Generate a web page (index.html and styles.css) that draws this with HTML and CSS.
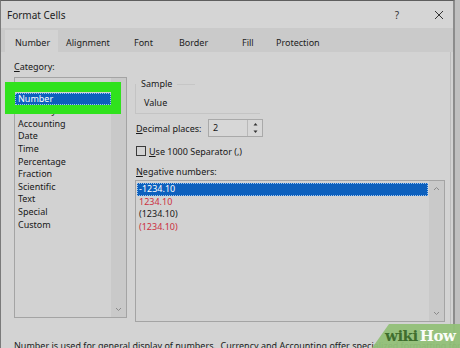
FILE: index.html
```html
<!DOCTYPE html>
<html>
<head>
<meta charset="utf-8">
<link rel="stylesheet" href="styles.css">
</head>
<body>
<div class="screen">
  <div class="window">
    <div class="titlebar">
      <span class="title">Format Cells</span>
      <span class="help">?</span>
      <span class="close"><svg width="10" height="10" viewBox="0 0 10 10"><path d="M1 1L9 9M9 1L1 9" stroke="#333" stroke-width="1"/></svg></span>
    </div>
    <div class="tabs">
      <span class="tab active t-number">Number</span>
      <span class="tab t-align">Alignment</span>
      <span class="tab t-font">Font</span>
      <span class="tab t-border">Border</span>
      <span class="tab t-fill">Fill</span>
      <span class="tab t-prot">Protection</span>
    </div>
    <div class="panel">
      <div class="cols">
        <div class="left">
          <div class="label"><u>C</u>ategory:</div>
          <div class="listbox cat">
            <div class="items">
              <div class="item">General</div>
              <div class="item sel">Number</div>
              <div class="item">Currency</div>
              <div class="item">Accounting</div>
              <div class="item">Date</div>
              <div class="item">Time</div>
              <div class="item">Percentage</div>
              <div class="item">Fraction</div>
              <div class="item">Scientific</div>
              <div class="item">Text</div>
              <div class="item">Special</div>
              <div class="item">Custom</div>
            </div>
            <div class="scrollbar">
              <svg class="chev" width="7" height="5" viewBox="0 0 7 5"><path d="M1 4L3.5 1.5L6 4" fill="none" stroke="#8a8a8a" stroke-width="1"/></svg>
              <svg class="chev" width="7" height="5" viewBox="0 0 7 5"><path d="M1 1L3.5 3.5L6 1" fill="none" stroke="#8a8a8a" stroke-width="1"/></svg>
            </div>
          </div>
        </div>
        <div class="right">
          <div class="sample">
            <div class="legend"><span>Sample</span><span class="legend-line"></span></div>
            <div class="sample-box">Value</div>
          </div>
          <div class="decimal">
            <span class="dlabel"><u>D</u>ecimal places:</span>
            <div class="spin">
              <span class="spin-val">2</span>
              <span class="spin-btns">
                <svg width="15" height="8" viewBox="0 0 15 8"><path d="M5.5 5.5L7.5 3L9.5 5.5Z" fill="#333"/></svg>
                <svg width="15" height="8" viewBox="0 0 15 8"><path d="M5.5 2.5L7.5 5L9.5 2.5Z" fill="#333"/></svg>
              </span>
            </div>
          </div>
          <div class="check">
            <span class="box"></span>
            <span><u>U</u>se 1000 Separator (,)</span>
          </div>
          <div class="label neg-label"><u>N</u>egative numbers:</div>
          <div class="listbox neg">
            <div class="items">
              <div class="item sel">-1234.10</div>
              <div class="item red">1234.10</div>
              <div class="item">(1234.10)</div>
              <div class="item red">(1234.10)</div>
            </div>
            <div class="scrollbar">
              <svg class="chev" width="7" height="5" viewBox="0 0 7 5"><path d="M1 4L3.5 1.5L6 4" fill="none" stroke="#8a8a8a" stroke-width="1"/></svg>
              <svg class="chev" width="7" height="5" viewBox="0 0 7 5"><path d="M1 1L3.5 3.5L6 1" fill="none" stroke="#8a8a8a" stroke-width="1"/></svg>
            </div>
          </div>
        </div>
      </div>
      <div class="desc">Number is used for general display of numbers.&nbsp; Currency and Accounting offer specialized formatting for monetary value.</div>
    </div>
  </div>
  <div class="highlight"></div>
  <div class="wikihow">
    <svg class="wh-bg" width="88" height="24" viewBox="0 0 88 24"><path d="M0 24L17 0H88V24Z" fill="#92c078" fill-opacity="0.95"/></svg>
    <span class="wh-text"><span class="wiki">wiki</span><span class="how">How</span></span>
  </div>
</div>
</body>
</html>
```

FILE: styles.css
```css
* { box-sizing: border-box; margin: 0; padding: 0; }
html, body { width: 460px; height: 348px; overflow: hidden; }
body {
  background: #c0c0c0;
  font-family: "Noto Sans", "Open Sans", sans-serif;
  font-size: 9px;
  color: #181818;
}
u { text-decoration: underline; text-underline-offset: 1px; }
.screen { position: relative; width: 460px; height: 348px; overflow: hidden; }

.window {
  width: 455px;
  height: 348px;
  background: #d3d3d3;
  border-top: 1px solid #5e5e5e;
  border-left: 1px solid #7a7a7a;
  border-right: 2px solid #8c8c8c;
  display: flex;
  flex-direction: column;
}

.titlebar {
  height: 27px;
  flex: none;
  display: flex;
  align-items: center;
  padding-left: 6px;
  background: #d5d5d5;
}
.title { flex: 1; font-size: 10px; color: #222; }
.help { width: 16px; text-align: center; margin-right: 26px; font-size: 10px; color: #333; }
.close { width: 16px; height: 12px; display: flex; align-items: center; justify-content: center; margin-right: 6px; }

.tabs {
  height: 24px;
  flex: none;
  display: flex;
  align-items: flex-end;
  padding-left: 4px;
  background: #cacaca;
}
.tab {
  height: 22px;
  padding-top: 6px;
  line-height: 14px;
  padding-left: 8px;
  color: #222;
}
.tab.active { background: #d3d3d3; padding-left: 10px; }
.t-number { width: 53px; }
.t-align { width: 68px; }
.t-font { width: 45px; }
.t-border { width: 63px; }
.t-fill { width: 34px; }
.t-prot { width: 62px; }

.panel {
  flex: 1;
  margin: 0 2px 0 4px;
  background: #d3d3d3;
  border-right: 1px solid #bdbdbd;
  padding: 9px 0 0 9px;
  display: flex;
  flex-direction: column;
}
.cols { display: flex; }
.left { width: 113px; flex: none; }
.right { width: 310px; flex: none; margin-left: 8px; }

.label { height: 12px; line-height: 12px; }

.listbox {
  display: flex;
  border: 1px solid #a4a4a4;
  background: #d2d2d2;
}
.listbox .items { flex: 1; padding-top: 2px; }
.item { height: 12.6px; line-height: 12.6px; padding-left: 3px; white-space: nowrap; }
.item.sel { background: #0d60bd; color: #fff; outline: 1px dotted #9cc4f0; outline-offset: -1px; }
.item.red { color: #cc2f40; }
.scrollbar {
  width: 15px;
  flex: none;
  background: #c9c9c9;
  display: flex;
  flex-direction: column;
  justify-content: space-between;
  align-items: center;
  padding: 6px 0 5px;
}

.cat { height: 241px; margin-top: 4px; }
.cat .items { padding-top: 2px; }

.sample { margin-top: 17px; }
.legend { height: 12px; line-height: 12px; display: flex; align-items: center; padding-left: 6px; }
.legend-line { width: 18px; height: 1px; background: #c6c6c6; margin-left: 5px; }
.sample-box {
  margin-top: -6px;
  width: 125px;
  height: 30px;
  border-left: 1px solid #c4c4c4;
  border-bottom: 1px solid #c4c4c4;
  padding: 13px 0 0 8px;
  line-height: 12px;
}

.decimal { display: flex; align-items: center; margin-top: 5px; height: 18px; padding-left: 1px; }
.dlabel { width: 72px; }
.spin {
  width: 55px;
  height: 18px;
  border: 1px solid #a9a9a9;
  background: #d7d7d7;
  display: flex;
}
.spin-val { flex: 1; padding-left: 4px; line-height: 16px; }
.spin-btns { width: 15px; border-left: 1px solid #b9b9b9; display: flex; flex-direction: column; }

.check { display: flex; align-items: center; height: 12px; margin-top: 8px; padding-left: 1px; }
.box { width: 10px; height: 10px; border: 1px solid #3a3a3a; margin-right: 3px; }

.neg-label { margin-top: 9px; padding-left: 1px; }
.neg { height: 142px; margin-top: 2px; }
.neg .items { padding: 2px 1px 0 1px; }
.neg .item { padding-left: 2px; }
.neg .scrollbar { padding: 5px 0 5px; }

.desc { margin-top: 18px; line-height: 12px; white-space: nowrap; color: #1c1c1c; }

.highlight {
  position: absolute;
  left: 5px;
  top: 82px;
  width: 116px;
  height: 32px;
  border-style: solid;
  border-color: #30e21d;
  border-width: 10px 10px 9px 10px;
}

.wikihow { position: absolute; right: 0; bottom: 0; width: 88px; height: 24px; }
.wh-bg { position: absolute; left: 0; top: 0; }
.wh-text {
  position: absolute;
  left: 13px;
  top: 2px;
  font-family: "DejaVu Serif", "Liberation Serif", serif;
  font-weight: bold;
  font-size: 15px;
  line-height: 20px;
  letter-spacing: -0.5px;
}
.wiki { color: #3f6e2d; }
.how { color: #fbfdf8; margin-left: 2px; }
```
